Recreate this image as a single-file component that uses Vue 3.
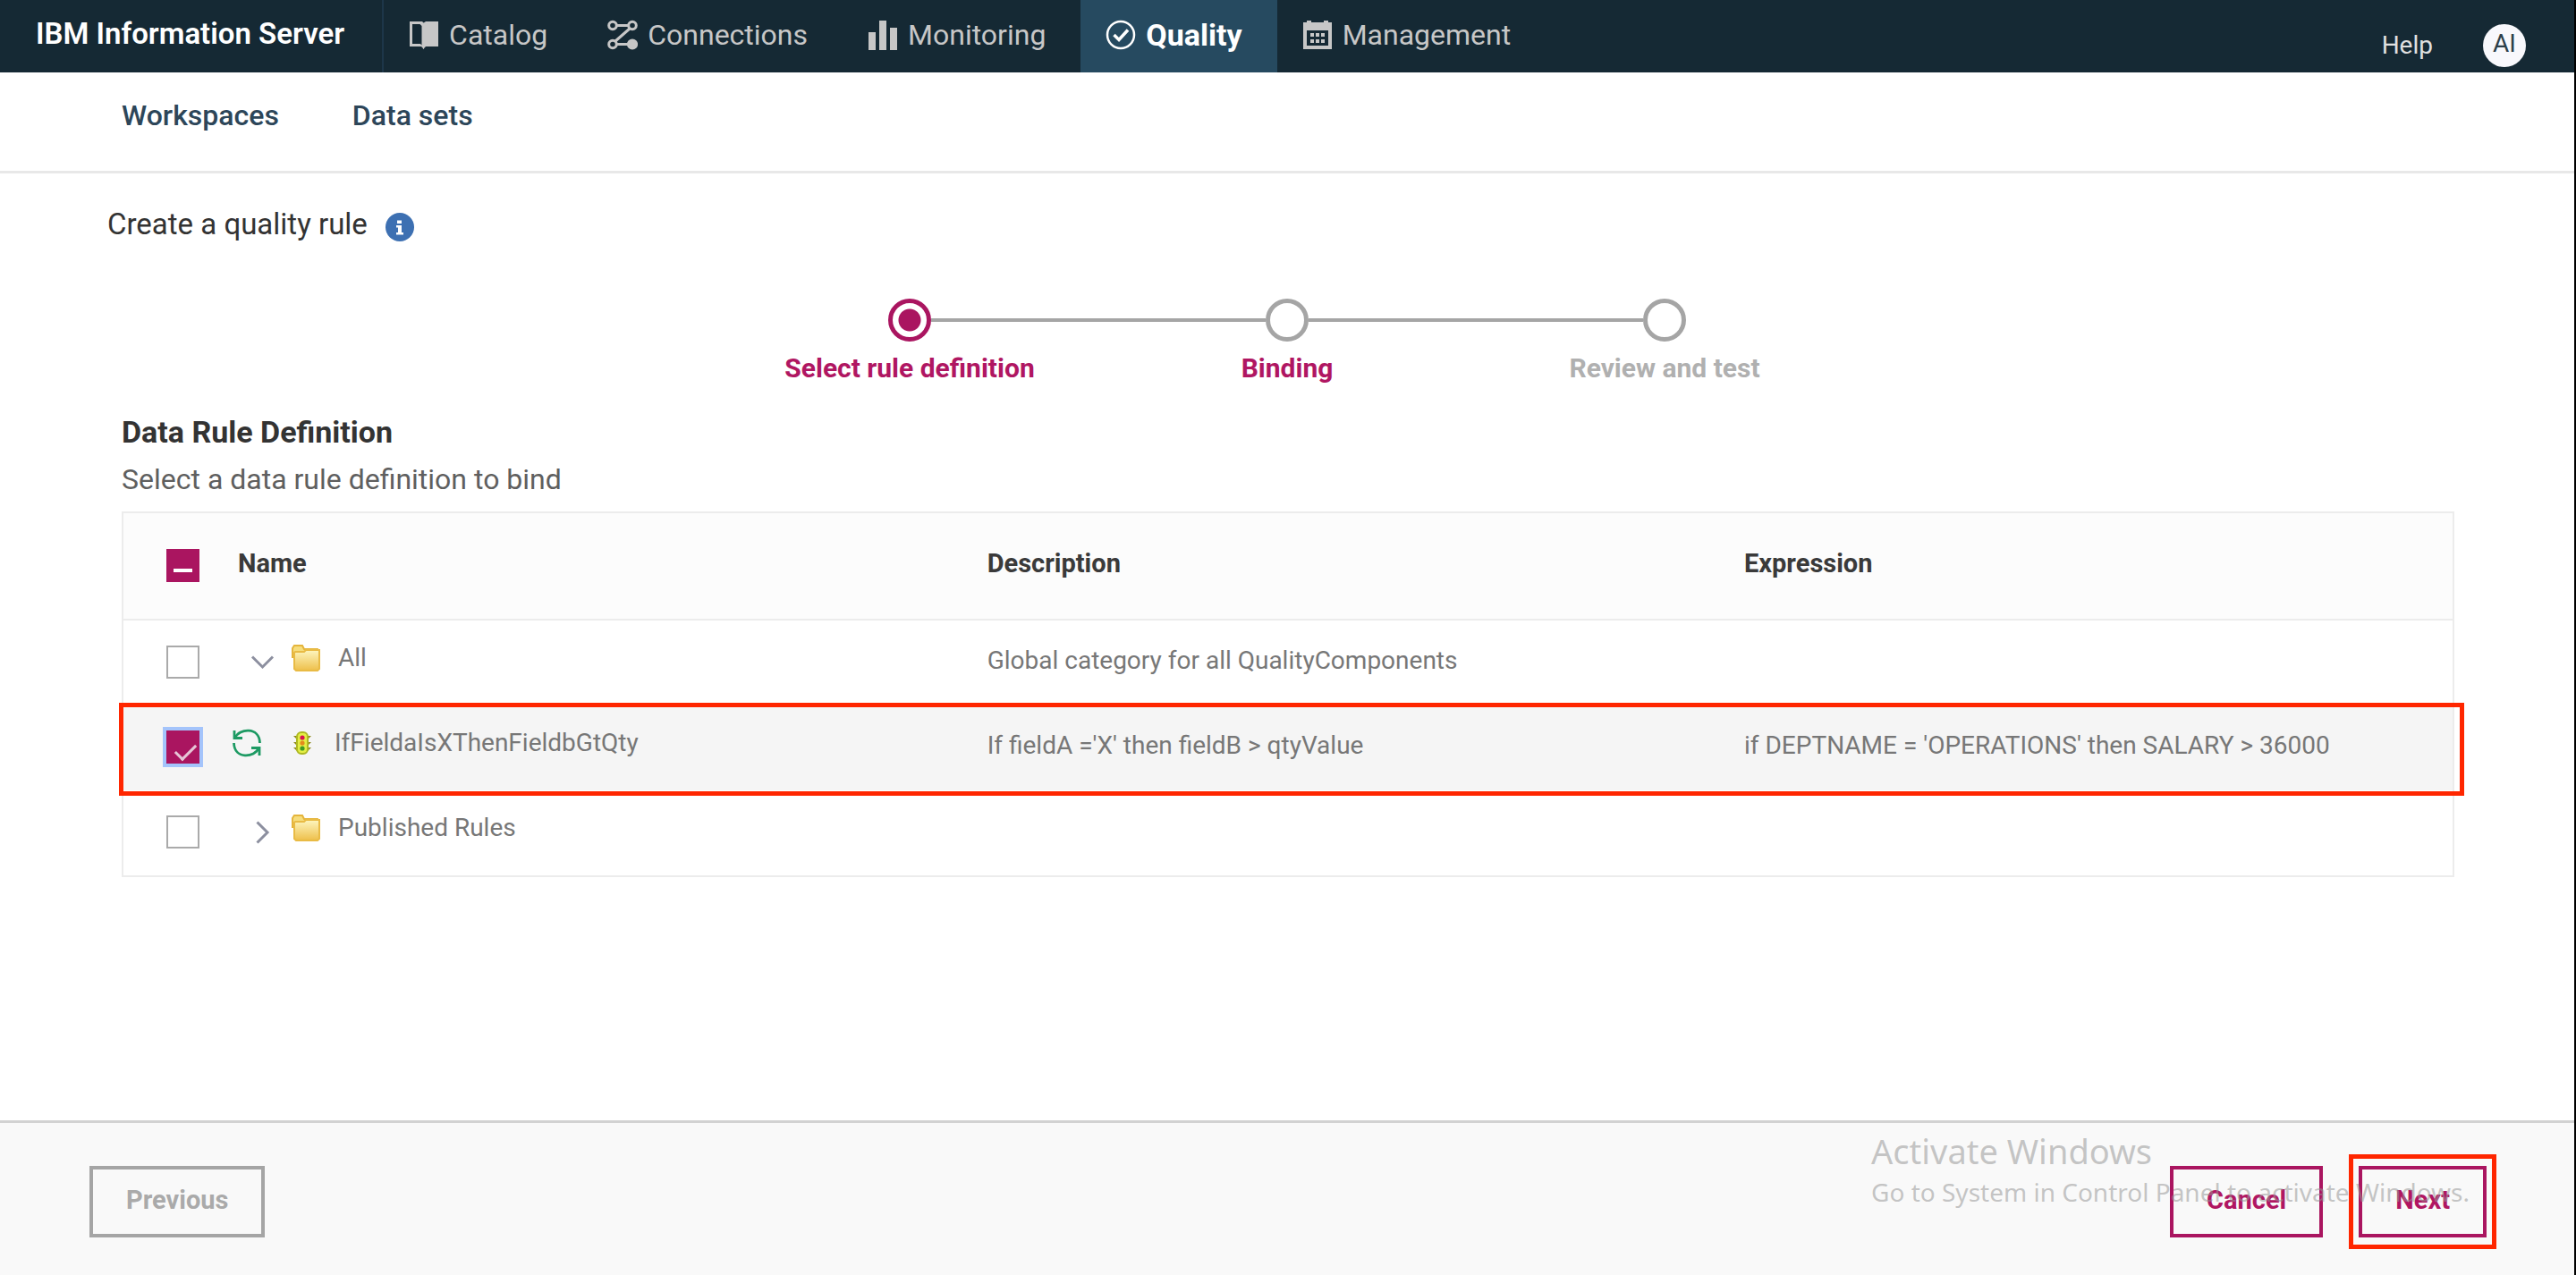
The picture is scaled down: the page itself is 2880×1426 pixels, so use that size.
<script setup>
import { ref } from 'vue'

const tabs = [
  { id: 'catalog', label: 'Catalog' },
  { id: 'connections', label: 'Connections' },
  { id: 'monitoring', label: 'Monitoring' },
  { id: 'quality', label: 'Quality' },
  { id: 'management', label: 'Management' }
]
const activeTab = ref('quality')

const steps = [
  { label: 'Select rule definition', state: 'current' },
  { label: 'Binding', state: 'next' },
  { label: 'Review and test', state: 'pending' }
]

const rows = ref([
  { id: 'all', kind: 'folder', open: true, checked: false, name: 'All', description: 'Global category for all QualityComponents', expression: '' },
  { id: 'rule', kind: 'rule', open: false, checked: true, name: 'IfFieldaIsXThenFieldbGtQty', description: "If fieldA ='X' then fieldB > qtyValue", expression: "if DEPTNAME = 'OPERATIONS' then SALARY > 36000" },
  { id: 'published', kind: 'folder', open: false, checked: false, name: 'Published Rules', description: '', expression: '' }
])
</script>

<template>
  <div class="page">
    <header class="topbar">
      <a class="brand" href="#">IBM Information Server</a>
      <nav class="tabs" aria-label="Main">
        <a
          v-for="tab in tabs"
          :key="tab.id"
          href="#"
          class="tab"
          :class="{ active: tab.id === activeTab }"
          @click.prevent="activeTab = tab.id"
        >
          <svg class="tab-icon" viewBox="0 0 34 34" aria-hidden="true">
            <g v-if="tab.id === 'catalog'" fill="currentColor">
              <path d="M1 2H15L17 4V33L14 30H1Z M4 5V27H13L14.500 28.500V7L12.500 5Z" fill-rule="evenodd" />
              <path d="M16 4L19 2H33V30H19L16 33Z" />
            </g>
            <g v-else-if="tab.id === 'connections'" fill="none" stroke="currentColor" stroke-width="3">
              <circle cx="6" cy="6.500" r="4.300" />
              <circle cx="28" cy="6.500" r="4.300" />
              <circle cx="6" cy="27.500" r="4.300" />
              <circle cx="28" cy="27.500" r="4.600" fill="currentColor" />
              <path d="M10 6.500H24M25 10L9 24M10 27.500H24" />
            </g>
            <g v-else-if="tab.id === 'monitoring'" fill="currentColor">
              <path d="M1 14H9V34H1Z" />
              <path d="M13 1H21V34H13Z" />
              <path d="M25 9H33V34H25Z" />
            </g>
            <g v-else-if="tab.id === 'quality'" fill="none" stroke="currentColor">
              <circle cx="17" cy="17" r="15" stroke-width="2.500" />
              <path d="M9.500 17L15 22.500L25 11.500" stroke-width="3.500" />
            </g>
            <g v-else fill="currentColor">
              <path d="M1 3H5V1H10V3H24V1H29V3H33V33H1Z M5 12V29H29V12Z" fill-rule="evenodd" />
              <path d="M9 15h4v4H9zM15 15h4v4h-4zM21 15h4v4h-4zM9 22h4v4H9zM15 22h4v4h-4zM21 22h4v4h-4z" />
            </g>
          </svg>
          <span>{{ tab.label }}</span>
        </a>
      </nav>
      <div class="account">
        <a class="help" href="#">Help</a>
        <button class="avatar" type="button">AI</button>
      </div>
    </header>

    <nav class="subnav" aria-label="Quality">
      <a href="#">Workspaces</a>
      <a href="#">Data sets</a>
    </nav>

    <main class="content">
      <div class="heading">
        <h1>Create a quality rule</h1>
        <button class="info" type="button" aria-label="About quality rules">
          <svg viewBox="0 0 32 32" aria-hidden="true">
            <circle cx="16" cy="16" r="16" fill="#3d70b2" />
            <path d="M13 8.500H18V12H13ZM12 14H18V22H20V24.500H12V22H14V16.500H12Z" fill="#fff" />
          </svg>
        </button>
      </div>

      <ol class="stepper">
        <li v-for="step in steps" :key="step.label" class="step" :class="step.state">
          <div class="track">
            <span class="line"></span>
            <span class="dot"></span>
            <span class="line"></span>
          </div>
          <span class="step-label">{{ step.label }}</span>
        </li>
      </ol>

      <section class="definitions">
        <h2>Data Rule Definition</h2>
        <p>Select a data rule definition to bind</p>
        <table class="grid">
          <colgroup>
            <col class="col-check" />
            <col class="col-name" />
            <col class="col-description" />
            <col />
          </colgroup>
          <thead>
            <tr>
              <th class="check-cell"><input class="box" type="checkbox" :indeterminate="true" aria-label="Select all" /></th>
              <th class="name-head">Name</th>
              <th>Description</th>
              <th>Expression</th>
            </tr>
          </thead>
          <tbody>
            <tr v-for="row in rows" :key="row.id" :class="{ selected: row.checked }">
              <td class="check-cell">
                <input v-model="row.checked" class="box" :class="{ focused: row.kind === 'rule' }" type="checkbox" :aria-label="row.name" />
              </td>
              <td>
                <div class="name" :class="row.kind">
                  <div class="lead">
                    <button v-if="row.kind === 'folder'" class="toggle" type="button" :aria-label="'Toggle ' + row.name" @click="row.open = !row.open">
                      <svg viewBox="0 0 32 32" fill="none" stroke="#8c8f9f" stroke-width="3" aria-hidden="true">
                        <path v-if="row.open" d="M5 14.500L16.500 26L28 14.500" />
                        <path v-else d="M10.500 9.500L22 21L10.500 32.500" />
                      </svg>
                    </button>
                    <svg v-else class="refresh" viewBox="0 0 32 32" fill="none" stroke="#1d9a63" stroke-width="2.800" aria-hidden="true">
                      <path d="M2 2V10.500H11" />
                      <path d="M3 10C7 0 30 -3 30.500 16" />
                      <path d="M30 30V21.500H21" />
                      <path d="M29 22C25 32 2 35 1.500 16" />
                      <path d="M1 5L7 11H1ZM31 27L25 21H31Z" fill="#1d9a63" stroke="none" />
                    </svg>
                  </div>
                  <div class="kind">
                    <svg v-if="row.kind === 'folder'" class="folder" viewBox="0 0 32 30" aria-hidden="true">
                      <defs>
                        <linearGradient :id="'fill-' + row.id" x1="0" y1="0" x2="0" y2="1">
                          <stop offset="0" stop-color="#fdf6c0" />
                          <stop offset="1" stop-color="#eebf4a" />
                        </linearGradient>
                      </defs>
                      <path d="M1 14V4L3 1H12L14 5H29L31 8V14Z" fill="#f6dd7c" stroke="#e5b53c" stroke-width="2" />
                      <path d="M4 8H14L16 6H31V27L29 29H5L3 27V9Z" :fill="`url(#fill-${row.id})`" stroke="#e9bb45" stroke-width="2" />
                    </svg>
                    <svg v-else class="light" viewBox="0 0 24 26" aria-hidden="true">
                      <path d="M2 5H22L18 9H6ZM2 12H22L18 16H6ZM2 18H22L18 22H6Z" fill="#8e8a1e" />
                      <rect x="6" y="1" width="12" height="24" rx="5" fill="#e3ee45" stroke="#aeb822" stroke-width="2" />
                      <circle cx="12" cy="7" r="2.600" fill="#d8124f" />
                      <circle cx="12" cy="13" r="2.600" fill="#e38a1c" />
                      <circle cx="12" cy="19" r="2.600" fill="#3f9a24" />
                    </svg>
                  </div>
                  <span>{{ row.name }}</span>
                </div>
              </td>
              <td>{{ row.description }}</td>
              <td>{{ row.expression }}</td>
            </tr>
          </tbody>
        </table>
      </section>
    </main>

    <footer class="actions">
      <button class="btn" type="button" disabled>Previous</button>
      <div class="actions-right">
        <button class="btn" type="button">Cancel</button>
        <button class="btn marked" type="button">Next</button>
      </div>
      <div class="watermark">
        <p class="watermark-title">Activate Windows</p>
        <p>Go to System in Control Panel to activate Windows.</p>
      </div>
    </footer>
  </div>
</template>

<style>
body {
  background: #fff;
}
</style>

<style scoped>
* {
  box-sizing: border-box;
}
.page {
  display: flex;
  flex-direction: column;
  min-height: 100vh;
  border-right: 2px solid #000;
  font-family: Roboto, "Liberation Sans", sans-serif;
  font-size: 28px;
  line-height: 36px;
  color: #777;
}
a {
  color: inherit;
  text-decoration: none;
}
button {
  font: inherit;
  cursor: pointer;
}
h1,
h2,
p,
ol {
  margin: 0;
  padding: 0;
}
svg {
  display: block;
}

.topbar {
  display: flex;
  height: 81px;
  background: #152934;
  font-size: 32px;
  line-height: 40px;
  color: #c7c7c7;
}
.brand {
  display: flex;
  align-items: center;
  padding: 0 42px 6px 40px;
  border-right: 2px solid #1d3649;
  font-size: 33px;
  font-weight: 600;
  color: #fff;
  white-space: nowrap;
}
.tabs {
  display: flex;
  flex: 1;
}
.tab {
  display: flex;
  align-items: center;
  gap: 11px;
  padding: 0 39px 4px 28px;
}
.tab.active {
  background: #264a60;
  font-size: 34px;
  font-weight: 700;
  color: #fff;
}
.tab-icon {
  width: 34px;
  height: 34px;
}
.account {
  display: flex;
  align-items: center;
  gap: 56px;
  padding: 20px 54px 0 0;
  font-size: 28px;
  color: #e0e0e0;
}
.avatar {
  width: 48px;
  height: 48px;
  padding: 0 0 4px;
  border: 0;
  border-radius: 50%;
  background: #f8f8fc;
  color: #2d3f49;
}

.subnav {
  display: flex;
  gap: 82px;
  height: 113px;
  padding: 28px 136px 0;
  border-bottom: 3px solid #e8e8e8;
  font-size: 32px;
  font-weight: 500;
  line-height: 40px;
  color: #2d4659;
}

.content {
  flex: 1;
  padding: 37px 0 60px;
}
.heading {
  display: flex;
  align-items: flex-start;
  gap: 20px;
  padding: 0 120px;
}
h1 {
  font-size: 33px;
  font-weight: 400;
  line-height: 40px;
  color: #333;
}
.info {
  width: 32px;
  height: 32px;
  margin-top: 7px;
  padding: 0;
  border: 0;
  background: none;
}

.stepper {
  display: flex;
  justify-content: center;
  margin-top: 63px;
  list-style: none;
  font-size: 30px;
  font-weight: 700;
}
.step {
  width: 422px;
  color: #b0b0b0;
  text-align: center;
}
.track {
  display: flex;
  align-items: center;
  margin-bottom: 12px;
}
.line {
  flex: 1;
  height: 4px;
  background: #a5a5a5;
}
.step:first-child .line:first-child,
.step:last-child .line:last-child {
  background: none;
}
.dot {
  width: 48px;
  height: 48px;
  border: 5px solid #a5a5a5;
  border-radius: 50%;
}
.current .dot {
  border-color: #aa1560;
  background: radial-gradient(circle, #aa1560 12px, #fff 13px);
}
.current .step-label,
.next .step-label {
  color: #b01662;
}

.definitions {
  margin-top: 33px;
  padding: 0 134px 0 136px;
}
h2 {
  font-size: 34px;
  font-weight: 700;
  line-height: 40px;
  color: #333;
}
.definitions p {
  margin: 13px 0 16px;
  font-size: 32px;
  line-height: 40px;
  color: #5f5f5f;
}
.grid {
  width: 100%;
  border: 2px solid #ececec;
  border-collapse: separate;
  border-spacing: 0;
  table-layout: fixed;
}
.col-check {
  width: 122px;
}
.col-name {
  width: 32.4%;
}
.col-description {
  width: 32.5%;
}
th {
  height: 120px;
  padding: 0 0 6px;
  border-bottom: 2px solid #ececec;
  background: #fcfcfc;
  font-size: 29px;
  font-weight: 700;
  text-align: left;
  color: #3a3a3a;
}
td {
  height: 95px;
  padding: 0 0 6px;
}
.name-head {
  padding-left: 6px;
}
th.check-cell,
td.check-cell {
  padding: 0 0 2px 48px;
}
.box {
  display: block;
  width: 37px;
  height: 37px;
  margin: 0;
  border: 2px solid #aaa;
  background: #fff;
  appearance: none;
}
.box:indeterminate {
  border-color: #aa1560;
  background: linear-gradient(#fff, #fff) 6px 20px / 21px 4px no-repeat #aa1560;
}
.box:checked {
  border-color: #aa1560;
  background: #aa1560;
}
.box:checked::after {
  content: "";
  display: block;
  width: 20px;
  height: 10px;
  margin: 13px 0 0 8px;
  border: solid #e6c5d6;
  border-width: 0 0 3px 3px;
  transform: rotate(-45deg);
}
.focused {
  box-shadow: 0 0 0 4px #a4c4fb;
}
.selected {
  position: relative;
}
.selected td {
  background: #f5f5f5;
}
.selected td:last-child::after {
  content: "";
  position: absolute;
  inset: -3px -13px -6px -5px;
  border: 5px solid #ff2600;
  pointer-events: none;
}
.name {
  display: flex;
  align-items: center;
  padding-bottom: 6px;
}
.lead {
  display: flex;
  width: 66px;
}
.folder .lead {
  justify-content: center;
}
.kind {
  width: 52px;
}
.rule .kind {
  width: 48px;
}
.toggle {
  width: 32px;
  height: 32px;
  padding: 0;
  border: 0;
  background: none;
}
.toggle svg {
  overflow: visible;
}
.refresh {
  width: 32px;
  height: 32px;
}
svg.folder {
  width: 32px;
  height: 30px;
}
.light {
  width: 24px;
  height: 26px;
}

.actions {
  position: relative;
  display: flex;
  justify-content: space-between;
  padding: 48px 98px 42px 100px;
  border-top: 3px solid #d2d2d2;
  background: #f9f9f9;
}
.actions-right {
  display: flex;
  gap: 40px;
}
.btn {
  position: relative;
  height: 80px;
  padding: 0 37px 4px;
  border: 4px solid #aa1560;
  background: none;
  font-size: 29px;
  font-weight: 700;
  color: #b01662;
}
.btn:disabled {
  border-color: #a5a5a5;
  color: #aaa;
}
.marked::after {
  content: "";
  position: absolute;
  inset: -17px -15px;
  border: 5px solid #ff2600;
}
.watermark {
  position: absolute;
  top: 8px;
  right: 117px;
  font-family: "Noto Sans", sans-serif;
  font-size: 28px;
  line-height: 46px;
  color: rgba(150, 150, 150, 0.55);
  pointer-events: none;
}
.watermark-title {
  font-size: 38px;
}
</style>
